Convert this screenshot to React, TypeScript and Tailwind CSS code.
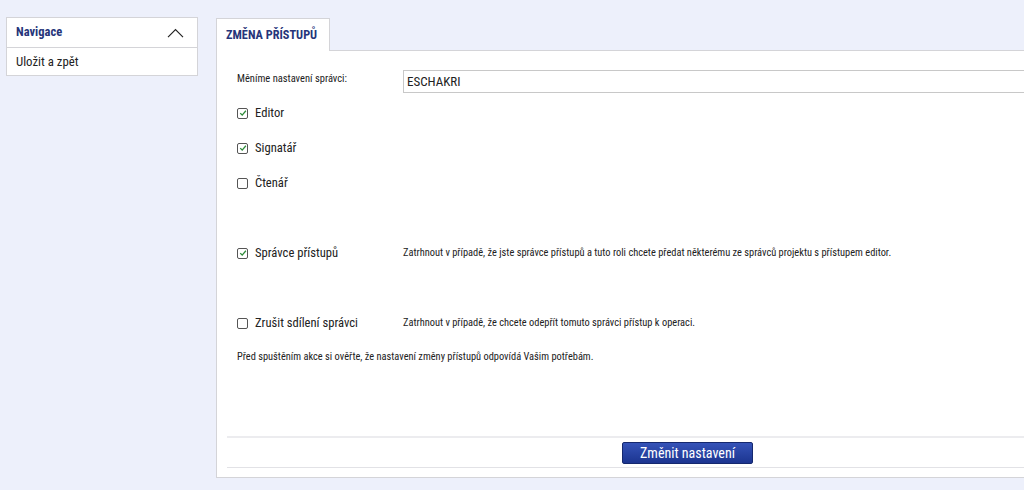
import { useState } from "react"

const font = "font-['Liberation_Sans_Narrow','Roboto_Condensed',Roboto,sans-serif]"

function Check({ checked, onChange }: { checked: boolean; onChange: () => void }) {
  return (
    <button
      onClick={onChange}
      className="w-[11px] h-[11px] border border-[#555] rounded-[2px] bg-white flex items-center justify-center shrink-0"
    >
      {checked && (
        <svg viewBox="0 0 10 10" className="w-[8px] h-[8px]">
          <path d="M1.5 5.2 L4 7.6 L8.6 2.2" fill="none" stroke="#2e8b3a" strokeWidth={1.6} />
        </svg>
      )}
    </button>
  )
}

export default function App() {
  const [roles, setRoles] = useState({ editor: true, signatar: true, ctenar: false, spravce: true, zrusit: false })
  const toggle = (k: keyof typeof roles) => setRoles({ ...roles, [k]: !roles[k] })

  return (
    <div className={`w-[1024px] h-[490px] bg-[#edf0fb] overflow-hidden flex gap-[18px] pl-[6px] pt-[17px] text-[#222] ${font}`}>
      {/* Navigace */}
      <div className="w-[192px] self-start bg-white border border-[#d4d4d8]">
        <div className="h-[30px] flex items-center justify-between px-[9px] border-b border-[#d4d4d8]">
          <span className="text-[12.5px] font-bold text-[#26357a]">Navigace</span>
          <svg viewBox="0 0 20 12" className="w-[17px] h-[10px] mr-[4px]">
            <path d="M1 11 L10 2 L19 11" fill="none" stroke="#222" strokeWidth={1.4} />
          </svg>
        </div>
        <div className="h-[27px] flex items-center px-[9px] text-[12.8px]">Uložit a zpět</div>
      </div>

      {/* Main */}
      <div className="flex-1 flex flex-col">
        <div className="flex">
          <div className="h-[33px] w-[114px] px-[9px] bg-white border border-[#d4d4d8] border-b-0 flex items-center text-[12.3px] font-bold text-[#26357a] relative top-[1px]">
            ZMĚNA PŘÍSTUPŮ
          </div>
        </div>
        <div className="h-[428px] bg-white border border-[#d4d4d8] border-r-0 pl-[10px] pt-[19px] flex flex-col">
          <div className="flex items-start pl-[10px]">
            <div className="w-[166px] text-[10.5px] pt-[1px]">Měníme nastavení správci:</div>
            <div className="flex-1 h-[23px] border border-[#c8c8c8] border-r-0 flex items-center px-[3px] text-[13px]">ESCHAKRI</div>
          </div>

          <div className="pl-[10px] mt-[12px] flex flex-col gap-[19px] text-[12.6px]">
            <label className="flex items-center gap-[7px] h-[16px]">
              <Check checked={roles.editor} onChange={() => toggle("editor")} />
              Editor
            </label>
            <label className="flex items-center gap-[7px] h-[16px]">
              <Check checked={roles.signatar} onChange={() => toggle("signatar")} />
              Signatář
            </label>
            <label className="flex items-center gap-[7px] h-[16px]">
              <Check checked={roles.ctenar} onChange={() => toggle("ctenar")} />
              Čtenář
            </label>
          </div>

          <div className="pl-[10px] mt-[54px] flex items-center h-[16px]">
            <label className="w-[166px] flex items-center gap-[7px] text-[12.6px]">
              <Check checked={roles.spravce} onChange={() => toggle("spravce")} />
              Správce přístupů
            </label>
            <span className="text-[10.4px]">
              Zatrhnout v případě, že jste správce přístupů a tuto roli chcete předat některému ze správců projektu s přístupem editor.
            </span>
          </div>

          <div className="pl-[10px] mt-[54px] flex items-center h-[16px]">
            <label className="w-[166px] flex items-center gap-[7px] text-[12.6px]">
              <Check checked={roles.zrusit} onChange={() => toggle("zrusit")} />
              Zrušit sdílení správci
            </label>
            <span className="text-[10.4px]">Zatrhnout v případě, že chcete odepřít tomuto správci přístup k operaci.</span>
          </div>

          <p className="pl-[10px] mt-[18px] text-[10.4px]">
            Před spuštěním akce si ověřte, že nastavení změny přístupů odpovídá Vašim potřebám.
          </p>

          <div className="mt-auto mb-[9px] border-t-2 border-[#ececef] border-b border-b-[#e2e2e6] h-[32px] flex items-center">
            <button className="ml-[395px] w-[131px] h-[22px] rounded-[2px] border border-[#15286e] bg-gradient-to-b from-[#3553b8] to-[#1c3590] text-white text-[14px] leading-none">
              Změnit nastavení
            </button>
          </div>
        </div>
      </div>
    </div>
  )
}
